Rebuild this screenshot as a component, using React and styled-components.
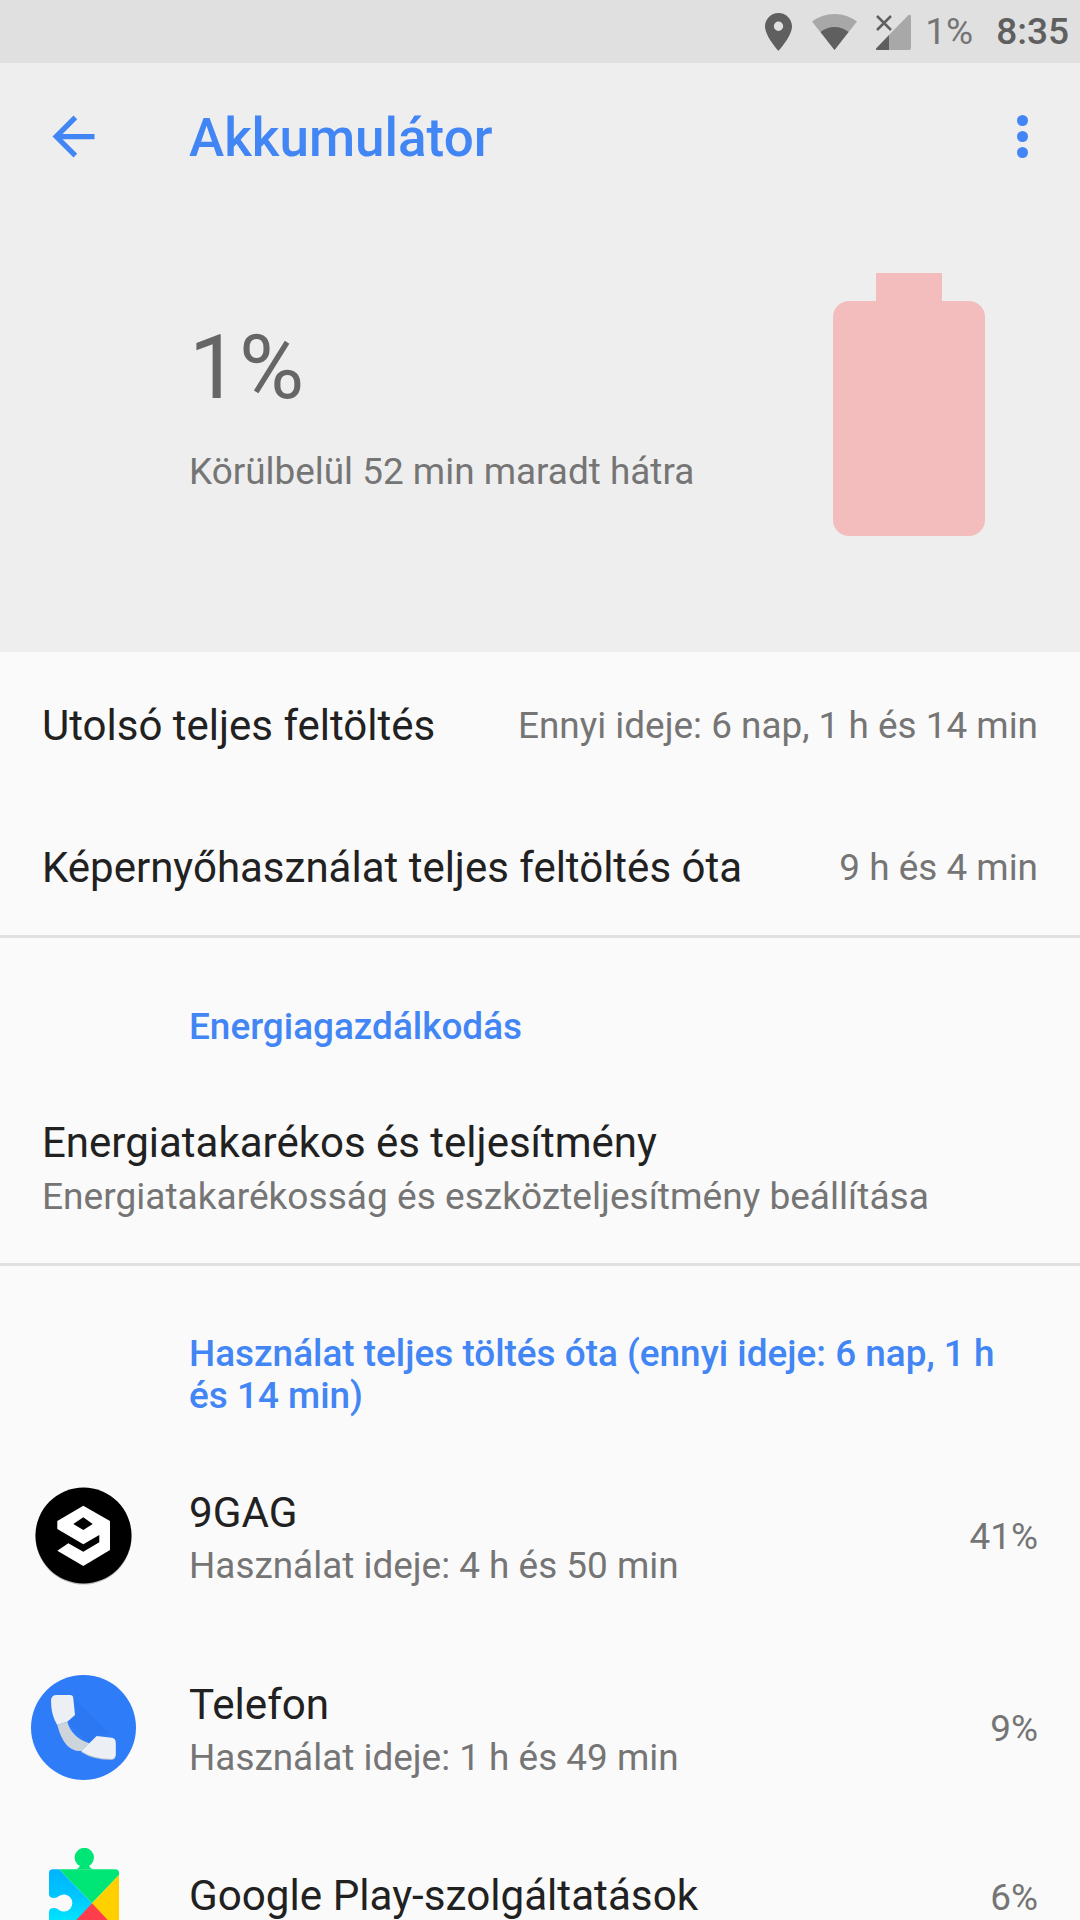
import React from "react";
import styled, { createGlobalStyle } from "styled-components";

const GlobalStyle = createGlobalStyle`
  html, body { margin: 0; padding: 0; background: #fafafa; }
  body { font-family: Roboto, "Noto Sans", sans-serif; }
`;

const Page = styled.div`
  width: 1080px;
  height: 1920px;
  overflow: hidden;
  background: #fafafa;
`;

const StatusBar = styled.div`
  height: 63px;
  background: #e0e0e0;
  display: flex;
  align-items: center;
  justify-content: flex-end;
  padding-right: 11px;
  box-sizing: border-box;
`;

const StatusIcon = styled.svg`
  display: block;
  flex: none;
  margin-left: ${(p) => p.$left || 0}px;
`;

const StatusText = styled.span`
  font-size: 37px;
  font-weight: ${(p) => p.$weight};
  color: ${(p) => p.$color};
  margin-left: ${(p) => p.$left}px;
  line-height: 63px;
`;

const Hero = styled.div`
  height: 589px;
  background: #eeeeee;
`;

const Toolbar = styled.div`
  height: 147px;
  display: flex;
  align-items: center;
  padding: 0 42px 0 42px;
`;

const Title = styled.h1`
  flex: 1;
  margin: 0 0 0 84px;
  font-size: 53px;
  padding-top: 2px;
  font-weight: 500;
  color: #4285f4;
`;

const Dots = styled.div`
  display: flex;
  flex-direction: column;
  gap: 5px;
  margin-right: 10px;
`;

const Dot = styled.span`
  width: 11px;
  height: 11px;
  border-radius: 50%;
  background: #4285f4;
`;

const Summary = styled.div`
  display: flex;
  justify-content: space-between;
  padding: 63px 95px 0 189px;
`;

const Charge = styled.div`
  padding-top: 43px;
`;

const Percent = styled.div`
  font-size: 89px;
  line-height: 104px;
  color: #666666;
`;

const Remaining = styled.div`
  margin-top: 30px;
  font-size: 36.9px;
  line-height: 44px;
  color: #757575;
`;

const Battery = styled.div`
  display: flex;
  flex-direction: column;
  align-items: center;
`;

const BatteryCap = styled.div`
  width: 66px;
  height: 28px;
  background: #f3bdbd;
`;

const BatteryBody = styled.div`
  width: 152px;
  height: 235px;
  border-radius: 16px;
  background: #f3bdbd;
`;

const Section = styled.section`
  border-bottom: ${(p) => (p.$line ? "3px solid #e0e0e0" : "none")};
`;

const InfoRow = styled.div`
  height: ${(p) => p.$h}px;
  padding: 0 42px;
  display: flex;
  align-items: center;
  justify-content: space-between;
`;

const InfoLabel = styled.span`
  font-size: 42px;
  color: #212121;
`;

const InfoValue = styled.span`
  font-size: 36.9px;
  color: #757575;
`;

const Category = styled.h2`
  margin: 0;
  padding: ${(p) => p.$pad};
  font-size: 36.9px;
  line-height: 42px;
  font-weight: 500;
  color: #4285f4;
`;

const Setting = styled.div`
  padding: 0 42px 39px;
`;

const SettingTitle = styled.div`
  font-size: 42px;
  line-height: 54px;
  color: #212121;
`;

const SettingSub = styled.div`
  font-size: 37.1px;
  line-height: 54px;
  color: #757575;
`;

const AppRow = styled.div`
  height: 191.6px;
  display: flex;
  align-items: center;
  padding-right: 42px;
`;

const AppIconSlot = styled.div`
  width: 189px;
  flex: none;
  display: flex;
  justify-content: center;
  padding-right: 22px;
  box-sizing: border-box;
`;

const AppText = styled.div`
  flex: 1;
  padding-top: 8px;
`;

const AppName = styled.div`
  font-size: 42.2px;
  line-height: 52px;
  color: #212121;
`;

const AppTime = styled.div`
  min-height: 52px;
  margin-top: 1px;
  font-size: 36.9px;
  line-height: 52px;
  color: #757575;
`;

const AppPercent = styled.div`
  padding-top: 2px;
  margin-bottom: ${(p) => (p.$raised ? 44 : 0)}px;
  font-size: 36.9px;
  color: #757575;
`;

const AppGlyph = styled.svg`
  display: block;
`;

const NineGagIcon = () => (
  <AppGlyph width="97" height="98" viewBox="0 0 97 98">
    <circle cx="48.5" cy="49.4" r="48.2" fill="#bdbdbd" />
    <circle cx="48.5" cy="48.5" r="48" fill="#000" />
    <path
      fill="#fff"
      fillRule="evenodd"
      d="M48.3 18.7 75 34V63L48.3 79 22.300 63.700 33.300 56.300 48.300 64.700 64.300 55.300V48L48.300 57.300 22.300 42V34ZM48.300 30.300 38.300 37 48.300 43 57.700 37Z"
    />
  </AppGlyph>
);

const PhoneIcon = () => (
  <AppGlyph width="105" height="105" viewBox="0 0 105 105">
    <circle cx="52.5" cy="52.5" r="52.5" fill="#2f7cf8" />
    <path fill="#1a5fd0" opacity="0.12" d="M42 22 78 58 66 61 58 68 37 47 44 40Z" />
    <path fill="#a9bad0" d="M50 77 58 69 84.700 68V80Q84.700 85 80 85 62 85 50 77Z" />
    <path
      fill="#eceff3"
      d="M25.700 20H39Q42 20 42.300 23.300L44 40 36.300 46.700 26.300 50Q20 40 20 25.700 20 20 25.700 20Z"
    />
    <path fill="#cdd5db" d="M26.300 50 36.300 46.700Q40.700 62.500 58.300 68.300L50 76Q33.200 77 26.300 50Z" />
    <path
      fill="#eceff3"
      d="M58.300 68.300 65.700 61 80.700 62.700Q84.700 63.200 84.700 67.300V79.300Q84.700 84 80 84 62 84 50 76Z"
    />
  </AppGlyph>
);

const PlayServicesIcon = () => (
  <AppGlyph width="70" height="142" viewBox="0 0 70 142">
    <defs>
      <linearGradient id="playBlue" x1="0" y1="21" x2="0" y2="73" gradientUnits="userSpaceOnUse">
        <stop offset="0" stopColor="#00b4ff" />
        <stop offset="0.5" stopColor="#00c4ff" />
        <stop offset="1" stopColor="#00e5ff" />
      </linearGradient>
    </defs>
    <circle cx="35.300" cy="9.500" r="9.700" fill="#00e676" />
    <path fill="#00e676" d="M26 21.300Q31 21 31 16H40Q40 21 45 21.300Z" />
    <path fill="#00e676" d="M10 21.300H66Q70 21.300 70 25V27L43 55.300Z" />
    <path
      fill="url(#playBlue)"
      d="M10 21.300H4Q0 21.300 0 25V46Q0 50 5 50 8 50 10 48A8.500 8.500 0 1 1 10 62Q8 60 5 60 0 60 0 64V90H16L43 55.300Z"
    />
    <path fill="#ffd000" d="M70 27V90H43V55.300Z" />
    <path fill="#ff3d4d" d="M43 55.300 16 84H70Z" />
  </AppGlyph>
);

const apps = [
  { name: "9GAG", time: "Használat ideje: 4 h és 50 min", pct: "41%", Icon: NineGagIcon },
  { name: "Telefon", time: "Használat ideje: 1 h és 49 min", pct: "9%", Icon: PhoneIcon },
  { name: "Google Play-szolgáltatások", pct: "6%", Icon: PlayServicesIcon, raised: true },
];

export default function App() {
  return (
    <Page>
      <GlobalStyle />
      <StatusBar>
        <StatusIcon width="27" height="38" viewBox="0 0 27 38">
          <path
            fill="#5f5f5f"
            fillRule="evenodd"
            d="M13.5 0C6 0 0 6 0 13.5 0 23 13.5 38 13.5 38S27 23 27 13.5C27 6 21 0 13.5 0Zm0 18a4.7 4.7 0 1 1 0-9.400 4.700 4.700 0 0 1 0 9.400Z"
          />
        </StatusIcon>
        <StatusIcon $left={20} width="45" height="36" viewBox="0 0 45 36">
          <path fill="#a8a8a8" d="M22.500 0C14 0 6 3 0 7.500L22.500 36 45 7.500C39 3 31 0 22.500 0Z" />
          <path fill="#5f5f5f" d="M22.500 13C17 13 12 15 8.500 18L22.500 36 36.500 18C33 15 28 13 22.500 13Z" />
        </StatusIcon>
        <StatusIcon $left={19} width="35" height="36" viewBox="0 0 35 36">
          <path fill="#a8a8a8" d="M35 2V34a2 2 0 0 1-2 2H13V21L32 1.500A2 2 0 0 1 35 2Z" />
          <path fill="#5f5f5f" d="M13 21V36H1a1 1 0 0 1-1-1.500Z" />
          <path stroke="#5f5f5f" strokeWidth="2.500" d="M1 2 15 16M15 2 1 16" />
        </StatusIcon>
        <StatusText $weight={400} $color="#757575" $left={14}>1%</StatusText>
        <StatusText $weight={500} $color="#5f5f5f" $left={23}>8:35</StatusText>
      </StatusBar>
      <Hero>
        <Toolbar>
          <svg width="63" height="63" viewBox="0 0 24 24" fill="#4285f4" style={{ display: "block" }}>
            <path d="M20 11H7.830l5.590-5.590L12 4l-8 8 8 8 1.410-1.410L7.830 13H20v-2z" />
          </svg>
          <Title>Akkumulátor</Title>
          <Dots>
            <Dot />
            <Dot />
            <Dot />
          </Dots>
        </Toolbar>
        <Summary>
          <Charge>
            <Percent>1%</Percent>
            <Remaining>Körülbelül 52 min maradt hátra</Remaining>
          </Charge>
          <Battery>
            <BatteryCap />
            <BatteryBody />
          </Battery>
        </Summary>
      </Hero>
      <Section $line>
        <InfoRow $h={147}>
          <InfoLabel>Utolsó teljes feltöltés</InfoLabel>
          <InfoValue>Ennyi ideje: 6 nap, 1 h és 14 min</InfoValue>
        </InfoRow>
        <InfoRow $h={136}>
          <InfoLabel>Képernyőhasználat teljes feltöltés óta</InfoLabel>
          <InfoValue>9 h és 4 min</InfoValue>
        </InfoRow>
      </Section>
      <Section $line>
        <Category $pad="68px 42px 68px 189px">Energiagazdálkodás</Category>
        <Setting>
          <SettingTitle>Energiatakarékos és teljesítmény</SettingTitle>
          <SettingSub>Energiatakarékosság és eszközteljesítmény beállítása</SettingSub>
        </Setting>
      </Section>
      <Section>
        <Category $pad="67px 42px 23px 189px">
          Használat teljes töltés óta (ennyi ideje: 6 nap, 1 h és 14 min)
        </Category>
        {apps.map(({ name, time, pct, Icon, raised }) => (
          <AppRow key={name}>
            <AppIconSlot>
              <Icon />
            </AppIconSlot>
            <AppText>
              <AppName>{name}</AppName>
              <AppTime>{time}</AppTime>
            </AppText>
            <AppPercent $raised={raised}>{pct}</AppPercent>
          </AppRow>
        ))}
      </Section>
    </Page>
  );
}
